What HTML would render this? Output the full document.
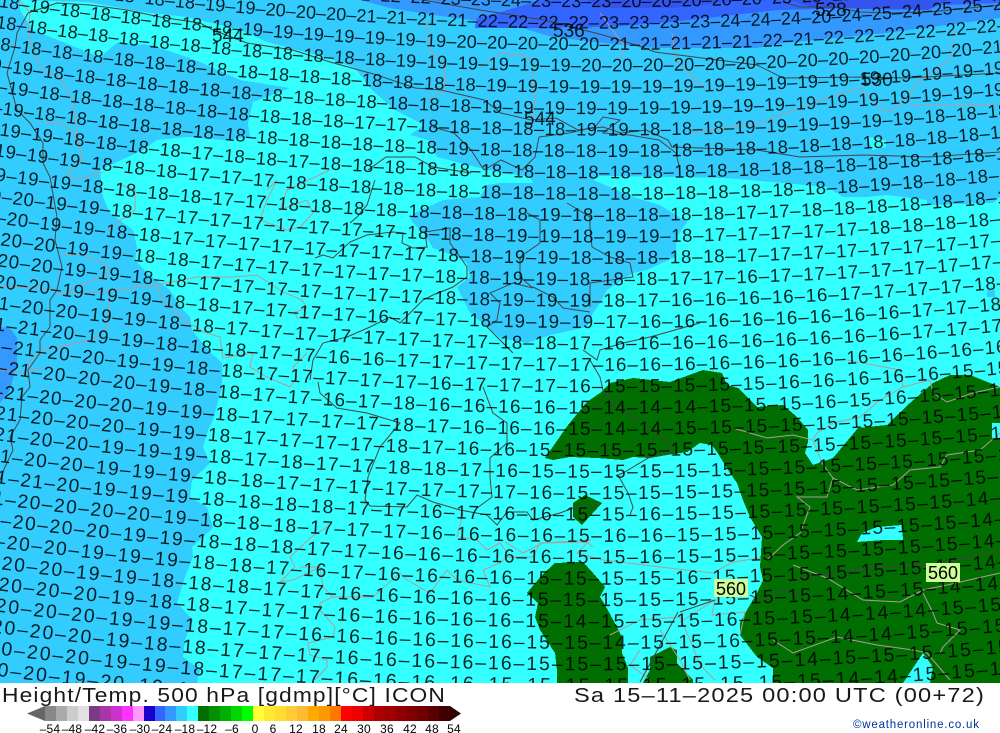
<!DOCTYPE html>
<html><head><meta charset="utf-8"><title>Height/Temp. 500 hPa</title>
<style>
html,body{margin:0;padding:0;background:#fff;width:1000px;height:733px;overflow:hidden}
svg{position:absolute;left:0;top:0}
text{font-family:"Liberation Sans",sans-serif;fill:#000}
.l text{fill-opacity:.85}
.bar{position:absolute;left:45px;top:706px;width:405px;height:15px;display:flex}
.bar i{flex:1;display:block}
</style></head><body>
<svg width="1000" height="733" viewBox="0 0 1000 733" xmlns="http://www.w3.org/2000/svg">
<defs><path id="a" d="M-40 -50.1Q500 31.9 1040 -24"/><path id="b" d="M-40 -47Q500 29.9 1040 -23"/><path id="c" d="M-40 -43.6Q500 27.7 1040 -22"/><clipPath id="m"><rect width="1000" height="683"/></clipPath></defs>
<g clip-path="url(#m)">
<g shape-rendering="crispEdges">
<rect width="1000" height="683" fill="#33ccff"/>
<polygon fill="#3399ff" points="360,0 390,8 433,15 471,20 522,28 552,37 603,43 655,48 757,48 783,43 886,33 1000,18 1000,0"/>
<polygon fill="#3366ff" points="540,0 501,12 477,18 475,28 544,28 608,27 672,22 715,17 779,10 864,8 1000,3 1000,0"/>
<polygon fill="#3355ee" points="586,0 603,8 672,8 749,0"/>
<polygon fill="#3355ee" points="791,0 813,8 928,10 950,0"/>
<polygon fill="#3399ff" points="0,327 10,328 17,338 17,363 10,390 0,403"/>
<polygon fill="#33ffff" points="20,0 88,2 143,12 187,17 240,30 267,42 328,58 355,68 372,90 395,110 424,125 410,135 428,140 437,157 488,170 530,177 533,183 500,183 487,185 480,197 443,200 415,213 410,218 413,223 425,235 433,248 457,257 467,263 470,277 457,287 465,303 470,313 487,327 500,338 527,343 550,335 587,327 593,313 602,300 607,290 633,273 647,270 675,257 677,237 687,222 660,205 633,197 593,180 600,176 680,177 723,178 750,180 827,187 843,197 867,197 887,195 927,200 927,205 993,203 1000,197 1000,683 197,683 200,670 183,657 185,640 193,620 177,603 185,577 193,557 192,547 213,528 207,507 190,497 192,480 210,463 203,447 208,430 213,420 222,387 222,363 208,350 192,330 190,317 180,307 170,290 147,273 135,260 137,247 133,230 110,213 103,197 100,170 143,150 157,140 187,137 223,140 250,137 248,123 253,102 290,88 240,80 200,62 187,57 150,45 117,43 100,57 33,30 20,10"/>
<polygon fill="#33ffff" points="868,137 886,140 886,147 872,150"/>
<polygon fill="#33ccff" points="987,290 995,290 995,297 987,297"/>
<polygon fill="#006e00" points="545,458 568,425 587,402 600,393 610,383 633,378 670,382 703,370 722,373 727,385 738,388 757,407 783,405 797,417 808,430 808,442 805,453 813,465 833,458 858,428 887,425 910,403 933,383 950,375 970,375 1000,387 1000,683 773,683 773,668 757,657 740,635 740,623 747,610 757,593 763,580 760,567 762,537 750,517 743,500 737,483 730,473 717,452 712,445 700,443 687,452 667,455 650,458 633,457 623,460 597,458 570,457 553,460"/>
<polygon fill="#006e00" points="573,503 585,495 602,503 582,525 573,517"/>
<polygon fill="#006e00" points="527,593 542,575 555,563 583,562 593,573 605,587 600,597 605,605 617,627 622,637 622,653 628,668 628,683 557,683 557,670 555,653 540,630 535,617 538,603"/>
<polygon fill="#006e00" points="650,657 670,647 677,650 677,663 693,680 693,683 643,683 650,670"/>
<polygon fill="#33ffff" points="857,542 862,533 877,527 902,525 903,540 883,540"/>
<polygon fill="#33ffff" points="992,423 1000,423 1000,438 992,438"/>
<polygon fill="#33ffff" points="903,683 923,653 933,667 930,683"/>
</g>
<g fill="none" stroke="#b09c9c" stroke-width="1">
<path d="M20 0L30 13 28 33 33 53 43 70 60 78 72 100 77 133 82 160 67 173 77 180 103 172"/>
<path d="M43 123L62 124 72 132 78 143"/>
<path d="M107 230L135 210 135 190 117 183"/>
<path d="M267 190L277 180 267 200 260 220 287 230 300 227 313 213 307 200 280 210 287 190 330 170"/>
<path d="M0 287L43 288 60 293 100 292 157 285 197 277 233 277 257 275 283 292 302 300 307 308 295 312 297 318 310 317"/>
<path d="M157 285L163 303 173 310 187 323 197 327 203 332 220 337 223 358 253 353 250 367 267 377 290 387 297 377 293 367 307 353"/>
<path d="M110 292L107 327 93 340 43 350 30 360 28 370 43 368M0 370L28 373"/>
<path d="M63 255L83 255 108 265 107 275 67 290"/>
<path d="M330 525L310 538 290 557 295 567 280 582 293 580 320 567"/>
<path d="M300 567L320 567 323 587 333 597 320 603 320 610 335 627 333 637 308 643 310 655 327 660 327 667 315 680"/>
<path d="M333 597L373 597 400 573 407 580 430 593 447 570 457 580 490 587 483 570 500 563 507 557 533 557 540 543 587 542 593 547"/>
<path d="M460 537L477 540 487 550 500 543 507 553M463 513L457 537"/>
<path d="M505 542L523 553 543 543 590 540 577 553 603 560 660 567 713 573 733 562 760 558"/>
<path d="M733 428L767 438 793 435 813 440 822 463 833 478 857 490 893 485 910 470 940 467 947 455 980 450 1000 433"/>
<path d="M833 478L827 497 797 497 810 507 800 533 783 545 767 560"/>
<path d="M793 565L827 578 863 600 900 602 923 590 947 585 1000 573"/>
<path d="M923 593L933 613 937 623 960 630 943 647 940 653"/>
<path d="M773 640L793 653 837 637 877 645 913 650 927 653 950 680"/>
<path d="M847 360L900 370 903 387 930 380 933 393 947 402 973 393 1000 387"/>
<path d="M903 387L880 400 860 417 833 423 817 433 813 440"/>
<path d="M689 133L760 123 813 103 843 93 860 88 880 108 890 112 907 97 920 80 950 60 955 30"/>
<path d="M907 105L1000 105"/>
<path d="M426 20L430 50 445 67 445 90 428 100"/>
<path d="M672 33L676 60 693 77 706 90M600 13L625 47 620 60"/>
<path d="M480 67L501 53 531 57 535 100 531 133"/>
<path d="M610 635L640 620 680 617 690 640 700 665 715 680M640 650L630 665 650 680M660 630L680 660 690 680"/>
<path d="M680 622L715 600 712 615 745 612 740 635"/>
</g>
<g fill="none" stroke="#444" stroke-width="1">
<path d="M28 13L17 33 15 47 7 73 17 110 30 123 43 143 43 163 50 177 57 217 55 240 62 267 57 290 50 300 50 327 40 340 40 353 28 370 30 387 22 397 20 420 10 437 13 450 5 467 0 480"/>
<path d="M28 13L57 3 90 5 127 10 160 17 200 23 213 30 247 43 293 50 330 62 377 75 415 88 441 90 484 100 501 113 531 120 556 118 578 130 603 127 621 133 646 130 668 140 672 147 757 150 800 157 864 155 928 157 1000 152"/>
<path d="M423 0L480 10 544 20 603 35 642 47 655 52 757 65 783 78 864 77 907 78 1000 73"/>
<path d="M783 2L800 7 834 7 860 12 890 13 928 12 1000 5"/>
<path d="M350 223L357 217 367 205 375 180"/>
<path d="M315 258L323 255 333 258 350 242 367 235 393 232 403 233 402 243 413 248 427 247 425 232 450 228 450 243 460 257 467 267 467 277 453 287 433 295 423 300 400 323 390 317 370 327 347 337 323 343 313 360 310 380"/>
<path d="M567 203L590 217 590 227 592 247 610 257 630 263 633 277 590 283 590 307"/>
<path d="M527 213L540 220 540 243 520 257 520 277 533 288 513 283 490 293 500 303 497 320 487 327 493 333 513 353"/>
<path d="M533 287L553 297 563 308 590 312"/>
<path d="M700 323L650 337 623 343 600 350 597 360 583 350"/>
<path d="M318 382L320 393 337 408 367 413 400 423 380 447 368 477 365 500 370 506 407 507 417 495 433 502 460 510 487 515 497 525 507 512 527 512 533 520 560 513 573 508 600 505"/>
<path d="M483 387L493 413 507 423 507 443 490 458 490 477 492 497 477 508"/>
<path d="M590 360L600 377 603 390 613 403 640 423 667 440 670 452 660 455 650 457 623 473 618 475 628 493 633 507 630 515"/>
<path d="M539 137L569 133 595 127 603 117 620 120 603 133 629 135 659 140 676 153 680 170"/>
<path d="M433 127L454 133 471 150 484 170 501 160 522 170 535 157 539 137"/>
<path d="M368 170L386 157 415 157 433 167 471 173"/>
<path d="M800 595L783 590 760 600 750 595M790 580L840 572 870 568 910 565 935 565 1000 550"/>
<path d="M680 612L715 600M678 612L640 682"/>
</g>
<g class="l">
<text transform="translate(0,8.5)" style="font-size:18px;letter-spacing:.03px"><textPath href="#a" startOffset="20.9">–18–18–18–18–18–18–19–19–19–19–20–21–21–22–22–23–23–24–23–23–23–20–20–20–20–20–25–25–25–25–25</textPath></text>
<text transform="translate(0,29.9)" style="font-size:18.05px;letter-spacing:.09px"><textPath href="#a" startOffset="23.8">–18–18–18–18–18–18–18–19–19–20–20–20–21–21–21–21–22–22–22–22–23–23–23–23–24–24–24–20–24–25–24–25–25–25</textPath></text>
<text transform="translate(0,51.3)" style="font-size:18.09px;letter-spacing:.15px"><textPath href="#a" startOffset="28.7">–18–19–18–18–18–18–18–18–19–19–19–19–19–19–19–20–20–20–20–20–21–21–21–21–21–22–21–22–22–22–22–22–22–22</textPath></text>
<text transform="translate(0,72.7)" style="font-size:18.14px;letter-spacing:.22px"><textPath href="#a" startOffset="25.5">–18–18–18–18–18–18–18–18–18–18–18–18–18–19–19–19–19–19–19–20–20–20–20–20–20–20–20–20–20–20–20–20–21–21</textPath></text>
<text transform="translate(0,94.1)" style="font-size:18.18px;letter-spacing:.28px"><textPath href="#a" startOffset="19.4">–18–18–18–18–18–18–18–18–18–18–18–18–18–18–18–18–19–19–19–19–19–19–19–19–19–19–19–19–19–19–19–19–19–19</textPath></text>
<text transform="translate(0,115.5)" style="font-size:18.23px;letter-spacing:.34px"><textPath href="#a" startOffset="10.2">–19–19–18–18–18–18–18–18–18–18–18–18–18–18–18–18–19–19–19–19–19–19–19–19–19–19–19–19–19–19–19–19–19–19</textPath></text>
<text transform="translate(0,136.9)" style="font-size:18.27px;letter-spacing:.41px"><textPath href="#a" startOffset="5.1">–19–19–18–18–18–18–18–18–18–18–18–18–17–17–18–18–18–18–18–19–19–18–18–18–19–19–19–19–19–19–18–18–18–18</textPath></text>
<text transform="translate(0,158.3)" style="font-size:18.32px;letter-spacing:.47px"><textPath href="#a" startOffset="31.9">–19–18–18–18–18–18–18–18–18–18–18–18–18–18–19–18–18–18–18–19–18–18–18–18–18–18–18–18–18–18–18–18–18–18</textPath></text>
<text transform="translate(0,179.7)" style="font-size:18.36px;letter-spacing:.53px"><textPath href="#a" startOffset="28.8">–19–19–18–18–18–18–17–18–18–17–18–18–18–18–18–18–18–18–18–18–18–18–18–18–18–18–18–18–18–18–18–18–18–18</textPath></text>
<text transform="translate(0,201.1)" style="font-size:18.41px;letter-spacing:.6px"><textPath href="#a" startOffset="23.6">–19–19–19–18–18–18–17–17–17–18–18–18–18–18–18–18–18–18–18–18–18–18–18–18–18–18–18–19–18–18–18–18–18</textPath></text>
<text transform="translate(0,222.5)" style="font-size:18.45px;letter-spacing:.66px"><textPath href="#b" startOffset="13.5">–19–19–19–18–18–18–18–17–17–18–18–18–18–18–18–18–18–19–18–18–18–18–18–17–17–18–18–18–18–18–18–18–18</textPath></text>
<text transform="translate(0,243.9)" style="font-size:18.5px;letter-spacing:.72px"><textPath href="#b" startOffset="8.4">–20–20–19–19–18–17–17–17–17–17–17–17–17–18–18–18–19–19–18–19–19–18–17–17–17–17–17–18–18–18–18–18–18</textPath></text>
<text transform="translate(0,265.3)" style="font-size:18.54px;letter-spacing:.78px"><textPath href="#b" startOffset="2.2">–20–20–19–19–18–18–17–17–17–17–17–17–17–17–18–18–19–19–18–18–18–18–18–17–17–17–17–17–17–17–17–17–17</textPath></text>
<text transform="translate(0,286.7)" style="font-size:18.59px;letter-spacing:.85px"><textPath href="#b" startOffset="29.1">–20–20–19–19–18–18–17–17–17–17–17–17–17–18–18–19–19–18–18–18–17–17–16–17–17–17–17–17–17–17–17–18</textPath></text>
<text transform="translate(0,308.1)" style="font-size:18.63px;letter-spacing:.91px"><textPath href="#b" startOffset="25.9">–20–20–19–19–18–18–17–17–17–17–17–17–17–18–18–19–19–19–18–17–16–16–16–16–16–17–17–17–17–18–18–18</textPath></text>
<text transform="translate(0,329.5)" style="font-size:18.68px;letter-spacing:.97px"><textPath href="#b" startOffset="22.8">–20–20–19–19–19–18–18–17–17–17–17–16–17–17–18–19–19–19–17–16–16–16–16–16–16–16–16–17–17–18–18–18</textPath></text>
<text transform="translate(0,350.9)" style="font-size:18.72px;letter-spacing:1.04px"><textPath href="#b" startOffset="15.6">–21–20–20–19–19–18–18–17–17–17–17–17–17–17–17–18–18–17–16–16–16–16–16–16–16–16–16–17–17–17–17</textPath></text>
<text transform="translate(0,372.3)" style="font-size:18.77px;letter-spacing:1.1px"><textPath href="#b" startOffset="11.5">–21–21–20–19–19–18–18–18–17–17–16–16–17–17–17–17–17–17–16–16–16–16–16–16–16–16–16–16–16–16–16</textPath></text>
<text transform="translate(0,393.7)" style="font-size:18.81px;letter-spacing:1.16px"><textPath href="#b" startOffset="6.3">–21–21–20–20–19–19–18–18–17–17–17–17–17–16–17–17–17–16–15–15–15–15–15–16–16–16–16–16–15–15–15</textPath></text>
<text transform="translate(0,415.1)" style="font-size:18.86px;letter-spacing:1.23px"><textPath href="#b" startOffset="1.2">–21–21–20–20–20–19–18–18–17–17–16–17–18–16–16–16–16–15–14–14–14–15–15–15–16–15–16–15–15–15–15</textPath></text>
<text transform="translate(0,436.5)" style="font-size:18.9px;letter-spacing:1.29px"><textPath href="#c" startOffset="32">–21–20–20–20–19–19–18–17–17–17–17–18–17–16–16–16–15–14–14–15–15–15–15–15–15–15–15–15–15–15</textPath></text>
<text transform="translate(0,457.9)" style="font-size:18.95px;letter-spacing:1.35px"><textPath href="#c" startOffset="22.9">–21–20–20–20–19–19–18–17–17–17–17–18–17–16–16–15–15–15–15–15–15–15–15–15–15–15–15–15–15–15</textPath></text>
<text transform="translate(0,479.3)" style="font-size:18.99px;letter-spacing:1.42px"><textPath href="#c" startOffset="21.8">–21–20–20–19–19–19–18–17–18–17–17–18–18–17–16–15–15–15–15–15–15–15–15–15–15–15–15–15–15</textPath></text>
<text transform="translate(0,500.7)" style="font-size:19.04px;letter-spacing:1.48px"><textPath href="#c" startOffset="15.6">–21–20–20–19–19–19–18–18–17–17–17–17–17–17–17–16–15–15–15–15–15–15–15–15–15–15–15–15–15</textPath></text>
<text transform="translate(0,522.1)" style="font-size:19.08px;letter-spacing:1.54px"><textPath href="#c" startOffset="11.5">–21–21–20–19–19–19–18–18–18–18–17–17–16–17–16–16–15–15–16–15–15–15–15–15–15–15–15–14–14</textPath></text>
<text transform="translate(0,543.5)" style="font-size:19.13px;letter-spacing:1.61px"><textPath href="#c" startOffset="8.3">–21–20–20–20–20–19–18–18–18–17–17–17–16–16–16–16–15–16–16–15–15–15–15–15–15–15–15–14–14</textPath></text>
<text transform="translate(0,564.9)" style="font-size:19.17px;letter-spacing:1.67px"><textPath href="#c" startOffset="3.2">–21–20–20–20–19–19–18–18–18–17–17–16–16–16–16–16–15–15–16–15–15–15–15–15–15–15–15–14–14</textPath></text>
<text transform="translate(0,586.3)" style="font-size:19.22px;letter-spacing:1.73px"><textPath href="#c" startOffset="34">–20–20–19–19–19–18–18–17–16–17–16–16–16–16–15–15–15–15–16–15–15–15–15–15–15–15–14–14</textPath></text>
<text transform="translate(0,607.7)" style="font-size:19.26px;letter-spacing:1.8px"><textPath href="#c" startOffset="28.9">–20–20–19–19–18–18–18–17–17–16–16–16–16–16–15–15–15–15–15–15–15–15–14–15–15–14–14–14</textPath></text>
<text transform="translate(0,629.1)" style="font-size:19.31px;letter-spacing:1.86px"><textPath href="#c" startOffset="25.7">–20–20–20–19–18–18–17–17–17–16–16–16–16–16–15–14–15–15–15–16–15–15–14–14–14–15–15–15</textPath></text>
<text transform="translate(0,650.5)" style="font-size:19.35px;letter-spacing:1.92px"><textPath href="#c" startOffset="22.6">–20–20–20–19–19–18–17–17–16–16–16–16–16–16–15–15–14–15–15–16–15–15–14–14–15–15–15–15</textPath></text>
<text transform="translate(0,671.9)" style="font-size:19.4px;letter-spacing:1.99px"><textPath href="#c" startOffset="18.5">–20–20–20–19–18–18–17–17–17–16–16–16–16–16–15–15–15–15–15–15–15–14–15–15–15–15–15–15</textPath></text>
<text transform="translate(0,693.3)" style="font-size:19.44px;letter-spacing:2.05px"><textPath href="#c" startOffset="15.3">–20–20–20–19–19–18–17–17–17–16–16–16–16–15–15–15–15–15–15–15–15–15–14–14–15–15–15–15</textPath></text>
<text transform="translate(0,714.7)" style="font-size:19.49px;letter-spacing:2.11px"><textPath href="#c" startOffset="11.2">–20–20–19–20–19–18–18–17–17–16–16–16–16</textPath></text>
</g>
<g class="l" style="font-size:19px">
<text x="212" y="42">544</text>
<text x="553" y="37">536</text>
<text x="524" y="125">544</text>
<text x="861" y="86">530</text>
<text x="815" y="16">528</text>
</g>
<rect x="714" y="579" width="34" height="18" fill="#ccff99"/>
<rect x="926" y="563" width="34" height="19" fill="#ccff99"/>
<text x="716" y="595" style="font-size:18px" textLength="30">560</text>
<text x="928" y="579" style="font-size:18px" textLength="30">560</text>
</g>
<text x="2" y="702" style="font-size:20px;letter-spacing:1px" textLength="444" lengthAdjust="spacingAndGlyphs" fill-opacity=".9">Height/Temp. 500 hPa [gdmp][°C] ICON</text>
<text x="574" y="702" style="font-size:20px;letter-spacing:1px" textLength="411" lengthAdjust="spacingAndGlyphs" fill-opacity=".9">Sa 15–11–2025 00:00 UTC (00+72)</text>
<text x="853" y="728" style="font-size:11.5px;fill:#003399" textLength="126">©weatheronline.co.uk</text>
<polygon points="27,713.5 45,706 45,721" fill="#666"/>
<polygon points="450,706 461,713.5 450,721" fill="#300000"/>
<g style="font-size:12px;letter-spacing:.2px" text-anchor="middle">
<text x="50" y="733">–54</text><text x="72" y="733">–48</text><text x="95" y="733">–42</text><text x="117" y="733">–36</text><text x="140" y="733">–30</text><text x="162" y="733">–24</text><text x="185" y="733">–18</text><text x="207" y="733">–12</text><text x="232" y="733">–6</text><text x="255" y="733">0</text><text x="273" y="733">6</text><text x="296" y="733">12</text><text x="319" y="733">18</text><text x="341" y="733">24</text><text x="364" y="733">30</text><text x="387" y="733">36</text><text x="410" y="733">42</text><text x="432" y="733">48</text><text x="454" y="733">54</text>
</g>
</svg>
<div class="bar"><i style="background:#888"></i><i style="background:#aaa"></i><i style="background:#ccc"></i><i style="background:#e1e1e1"></i><i style="background:#7a3a84"></i><i style="background:#a836a8"></i><i style="background:#cc33cc"></i><i style="background:#ff33ff"></i><i style="background:#ff99ff"></i><i style="background:#1a00cc"></i><i style="background:#3366ff"></i><i style="background:#3399ff"></i><i style="background:#33ccff"></i><i style="background:#33ffff"></i><i style="background:#006e00"></i><i style="background:#009000"></i><i style="background:#00b000"></i><i style="background:#00d800"></i><i style="background:#00ff00"></i><i style="background:#ffff33"></i><i style="background:#ffe933"></i><i style="background:#ffdd33"></i><i style="background:#ffcc33"></i><i style="background:#ffbb33"></i><i style="background:#ffaa00"></i><i style="background:#ff9900"></i><i style="background:#ff7700"></i><i style="background:#ff0000"></i><i style="background:#ee0000"></i><i style="background:#cc0000"></i><i style="background:#aa0000"></i><i style="background:#a00000"></i><i style="background:#900000"></i><i style="background:#800000"></i><i style="background:#700000"></i><i style="background:#5a0000"></i><i style="background:#400000"></i></div>
</body></html>
